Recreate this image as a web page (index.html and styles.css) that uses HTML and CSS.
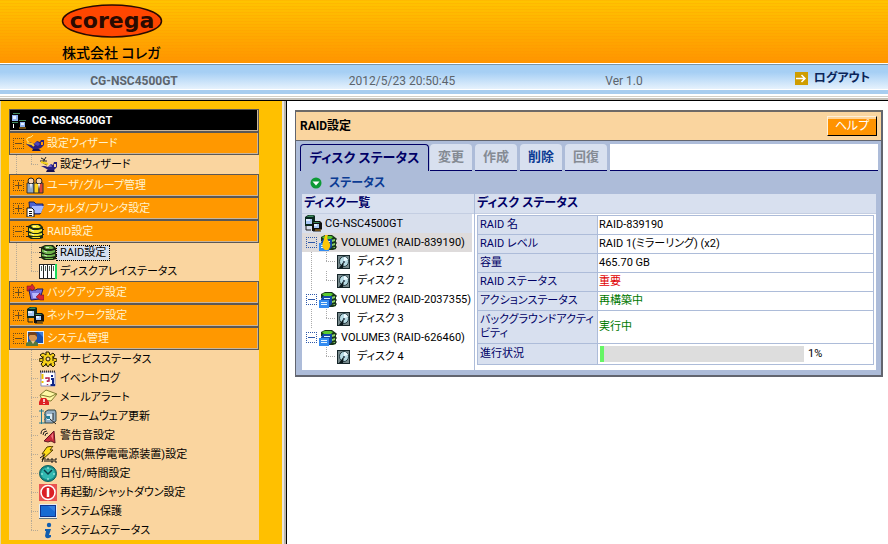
FILE: index.html
```html
<!DOCTYPE html>
<html lang="ja">
<head>
<meta charset="utf-8">
<title>RAID設定</title>
<link rel="stylesheet" href="styles.css">
</head>
<body>
<svg class="defs" aria-hidden="true">
  <symbol id="i-pc" viewBox="0 0 18 17">
    <path d="M1 2L4 0H10L11 1V9L9 11H1Z" fill="#0b2a20"/><path d="M3 1.500L5 .5H10L9 2H3Z" fill="#3f8b5c"/>
    <path d="M2 4H8V9H2Z" fill="#a9c8f5"/><path d="M2 4H6V6H2Z" fill="#e2eeff"/>
    <path d="M8 8L10 6H16L18 8V14L16 16H8Z" fill="#111"/><path d="M10 7H16L15 8H9Z" fill="#3f8b5c"/>
    <path d="M10 9H15V13H10Z" fill="#a9c8f5"/><path d="M10 9H13V11H10Z" fill="#e2eeff"/>
    <path d="M2 11V15H7M9 16H17" stroke="#222" fill="none"/><path d="M11 15H17" stroke="#c98a20"/>
  </symbol>
  <symbol id="i-pcw" viewBox="0 0 18 17">
    <path d="M2 1.500H9M1 10.500H7M8 8.500H15" stroke="#3f8b5c"/><path d="M1 3H7V9H1Z" fill="#8eb2ee"/><path d="M2 4H5V7H2Z" fill="#e2eeff"/>
    <path d="M9 10H14V15H9Z" fill="#8eb2ee"/><path d="M10 11H13V13H10Z" fill="#e2eeff"/><path d="M2.500 12V16" stroke="#fff"/><path d="M8 16H15" stroke="#c98a20"/>
  </symbol>
  <symbol id="i-lamp" viewBox="0 0 18 17">
    <path d="M4 8C0 6 0 3 3 2.500S6 1 7 0" fill="none" stroke="#fff2a0"/>
    <path d="M0 9L4 7L8 9L11 6L14 7L15 5H18V10L15 13L12 14H7L4 12Z" fill="#2a2180"/><path d="M8 9Q11 5 14 9L12 11Z" fill="#5147b8"/>
    <path d="M7 14H13L15 16H6Z" fill="#171150"/><path d="M1 8L6 9L8 11" fill="none" stroke="#ffca28" stroke-width="2"/><path d="M15 7H17V10H15Z" fill="#ff9800"/>
  </symbol>
  <symbol id="i-wiz" viewBox="0 0 18 17">
    <path d="M2 2L6 4M1 5H8M4 7L8 9M7 1L4 6" stroke="#222" fill="none"/><path d="M2 6L9 8" stroke="#f4d21c" stroke-width="2"/>
    <path d="M2 10H6L9 11L12 8L14 9L15 6H18V11L15 14H9L6 12Z" fill="#2a2180"/><path d="M9 11L12 8L13 11Z" fill="#6a60cc"/><path d="M8 14H15L16 16H7Z" fill="#171150"/><path d="M15 8H17V11H15Z" fill="#fad59f"/>
  </symbol>
  <symbol id="i-users" viewBox="0 0 18 17">
    <path d="M1 6H8V16H1Z" fill="#8ea8c8" stroke="#333"/><path d="M8 6H13V16H8Z" fill="#ffd21a" stroke="#333"/><path d="M13 6H17V16H13Z" fill="#d9453d" stroke="#333"/>
    <circle cx="5" cy="4" r="3" fill="#f7d3b0" stroke="#222"/><circle cx="13" cy="4" r="3" fill="#f7d3b0" stroke="#222"/><path d="M4 7L5 12L6 7M12 7L13 12L14 7" fill="#fff"/>
  </symbol>
  <symbol id="i-folder" viewBox="0 0 18 17">
    <path d="M3 2H8L10 4H17V7L14 14H4Z" fill="#4a62d0" stroke="#16205e"/><path d="M6 6H18L15 13H4Z" fill="#a5b9ff"/>
    <path d="M1 8H6L8 10V17H1Z" fill="#fff" stroke="#111"/><path d="M3 11.500H6M3 13.500H6M3 15.500H6" stroke="#111"/>
  </symbol>
  <symbol id="i-stack" viewBox="0 0 18 17">
    <path d="M2 3L6 1H14L17 4V15L14 16H5L2 14Z" fill="#1b2b12"/><path d="M0 3.500H3M0 8.500H3M0 13.500H3M16 6.500H18M16 11.500H18" stroke="#222"/>
    <path d="M5 3L7 2H12L15 4L13 5H7ZM3 5L7 7H12L16 6V8L12 10H7L3 8ZM3 10L7 11H12L16 10V12L12 13H7L3 12ZM5 14H14V15H7Z" fill="var(--disk)"/><path d="M7 3.500H10M5 7L8 8M5 11L8 12" stroke="#fff" opacity=".7"/>
  </symbol>
  <symbol id="i-bays" viewBox="0 0 18 17">
    <path d="M0 1H17V16H0Z" fill="#222"/><path d="M17 1V16" stroke="#19d85b" stroke-width="2"/><path d="M1 2H4V15H1ZM5 2H8V15H5ZM9 2H12V15H9ZM13 2H16V15H13Z" fill="#fff"/><path d="M2.500 3V8M6.500 3V8M10.500 3V8M14.500 3V8" stroke="#4f625a"/>
  </symbol>
  <symbol id="i-backup" viewBox="0 0 18 17">
    <path d="M3 6H10L11 5H17L14 15L5 16Z" fill="#7773dd" stroke="#1c1766"/><path d="M6 9H13L12 14H7Z" fill="#b9b8ff"/>
    <path d="M1 7V2H5L6 0L9 4L6 7L5 5H3V7Z" fill="#d82435" stroke="#5b1020" stroke-width=".5"/><path d="M10 13L14 9V11H18V16H14Z" fill="#d82435" stroke="#5b1020" stroke-width=".5"/>
  </symbol>
  <symbol id="i-admin" viewBox="0 0 18 17">
    <path d="M1 1H18V14H1Z" fill="#e6eef6"/><path d="M2 2H17V13H2Z" fill="#174fae"/><path d="M12 2L17 7V2Z" fill="#3e7edb"/>
    <path d="M3 5L5 3H9L11 5V9L8 12H6L3 9Z" fill="#d69652"/><path d="M2 7V4L4 2H9L11 4V7L9 5H4Z" fill="#70401d"/><path d="M0 16V13L4 11H9L12 13V16Z" fill="#55783d"/><path d="M5 11H9L7 14Z" fill="#e7c496"/>
  </symbol>
  <symbol id="i-gear" viewBox="0 0 18 17">
    <path d="M7 1H10L11 4L14 2L16 4L14 7L18 8V10L15 11L16 14L14 16L11 13L9 16L7 13L4 16L2 13L4 11L0 10V8L4 7L1 4L4 2L7 4Z" fill="#f6d21b" stroke="#251d05"/>
    <circle cx="9" cy="8" r="2" fill="#fad59f" stroke="#251d05"/><path d="M4 5V10M14 5V10M7 12V15M12 12V15" stroke="#251d05"/>
  </symbol>
  <symbol id="i-log" viewBox="0 0 18 17">
    <path d="M2 2H16V16H2Z" fill="#fff" stroke="#8989b8"/><path d="M1 1.500H17" stroke="#333" stroke-dasharray="1 1" stroke-width="2"/><path d="M3.500 4V9M3.500 11V13" stroke="#efc300" stroke-width="2"/>
    <path d="M7 9V8H10V11H8.500V12M8.500 14V15" fill="none" stroke="#b5234b" stroke-width="1.500"/><path d="M12 9H14V15M11.500 15H16M13 5V7" fill="none" stroke="#112888" stroke-width="2"/>
  </symbol>
  <symbol id="i-mail" viewBox="0 0 18 17">
    <path d="M1 6L7 1L18 5L12 12L3 11Z" fill="#fff8a5" stroke="#807a2f"/><path d="M2 6L11 8L17 5" fill="none" stroke="#807a2f"/>
    <path d="M0 16V13L2 9H7L10 13V16Z" fill="#dd2222"/><path d="M5 10V13M5 14V15" stroke="#fff" stroke-width="1.500"/>
  </symbol>
  <symbol id="i-fw" viewBox="0 0 18 17">
    <path d="M0 3H5M2.500 1V16M0 15H6" stroke="#237c95"/><path d="M6 4L9 2H16L17 4V13L14 15H6Z" fill="#93aec3" stroke="#344"/>
    <path d="M8 6H14V12H8Z" fill="#dcecf5"/><path d="M8 8H11V11H8Z" fill="#247f9b"/><path d="M11 11L17 16M14 5V12" stroke="#222"/><path d="M5 6L8 9L5 12" fill="none" stroke="#237c95"/>
  </symbol>
  <symbol id="i-horn" viewBox="0 0 18 17">
    <path d="M2 7Q2 2 7 2M4 8Q4 4 8 4M6 9Q6 6 9 6" fill="none" stroke="#222"/><path d="M5 14L15 4L16 16L12 14L9 15Z" fill="#c92d3c" stroke="#611924"/><path d="M12 9L14 6V13Z" fill="#ee7780"/>
  </symbol>
  <symbol id="i-ups" viewBox="0 0 18 17">
    <path d="M8 1L14 0L11 4H14L3 14L6 8H3Z" fill="#ffdf18" stroke="#4f3b00"/><path d="M1 12L5 9M3 16L5 11" stroke="#111"/><path d="M6 12V16M8 16V13H10V16M12 13V16H14V13H12M18 13H16V16H18" fill="none" stroke="#111"/>
  </symbol>
  <symbol id="i-clock" viewBox="0 0 18 17">
    <ellipse cx="9" cy="8.500" rx="8.500" ry="8" fill="#168b87" stroke="#10605e"/><ellipse cx="9" cy="8.500" rx="7" ry="6" fill="#31b8b0"/><path d="M5 5L9 9L13 5" fill="none" stroke="#073d46" stroke-width="1.500"/><path d="M9 2V4M9 13V15M2 9H4M14 9H16" stroke="#bbf2eb"/>
  </symbol>
  <symbol id="i-power" viewBox="0 0 18 17">
    <path d="M0 0H18V17H0Z" fill="#e95350"/><circle cx="9" cy="8.500" r="7" fill="#db1f25" stroke="#fff" stroke-width="1.500"/><path d="M9 4V13" stroke="#fff" stroke-width="2.500"/>
  </symbol>
  <symbol id="i-screen" viewBox="0 0 18 17">
    <path d="M0 1H18V15H0Z" fill="#e5edf2"/><path d="M1 2H17V14H1Z" fill="#12348c"/><path d="M2 3H16V13H2Z" fill="#176bd3"/><path d="M0 15.500H18" stroke="#60747d"/><path d="M9 3H16V9Z" fill="#327fe0"/>
  </symbol>
  <symbol id="i-info" viewBox="0 0 18 17">
    <circle cx="10" cy="3" r="2.200" fill="#135eae"/><path d="M6 7H12L10 13L12 13V15Q7 18 6 14L7 9H6Z" fill="#135eae"/>
  </symbol>
  <symbol id="i-vol" viewBox="0 0 18 17">
    <path d="M2 3L6 1H13L17 4V15L14 16H10V7H2Z" fill="#17371a"/><path d="M3 3L6 2H12L14 3L12 5H5Z" fill="#59c92f"/><path d="M12 6L16 5V7L13 8ZM13 10L16 9V11L13 12ZM13 14L16 13V14Z" fill="#8bd466"/><path d="M17 5H18M17 9H18M17 13H18" stroke="#111"/>
    <path d="M2 8L4 5H13V13L10 16H2Z" fill="#1149a8"/><path d="M0 9H10V17H0Z" fill="#358cf0"/><path d="M2 11.500H8M2 13.500H8M5 7.500H11" stroke="#e4f4ff"/>
  </symbol>
  <symbol id="i-disk" viewBox="0 0 13 14">
    <path d="M0 0H13V14H0Z" fill="#152529"/><path d="M1 1H12V13H1Z" fill="#77898c"/><ellipse cx="7" cy="6.500" rx="4.500" ry="5" fill="#b9dce5" stroke="#263e45"/><path d="M7 2V6L11 5Q10 2 7 2Z" fill="#edfaff"/><path d="M2 13L7 6L6 13Z" fill="#0b171b"/><circle cx="7" cy="7" r="1" fill="#345"/>
  </symbol>
</svg>

<header class="masthead">
  <div class="brand">
    <svg class="logo" viewBox="0 0 102 36" role="img" aria-label="corega">
      <ellipse cx="51" cy="18" rx="49.500" ry="16" fill="#ff4600" stroke="#2a0a00" stroke-width="1.500"/>
      <text class="logo-text" x="51" y="25" text-anchor="middle">corega</text>
    </svg>
    <div class="company">株式会社 コレガ</div>
  </div>
  <div class="infobar">
    <strong>CG-NSC4500GT</strong>
    <span>2012/5/23 20:50:45</span>
    <span>Ver 1.0</span>
    <a class="logout" href="#">
      <svg width="13" height="13" viewBox="0 0 13 13" aria-hidden="true"><path d="M0 0H13V13H0Z" fill="#cf9d00"/><path d="M1 6.500H10M6.500 3L10 6.500L6.500 10" fill="none" stroke="#fff" stroke-width="1.500"/></svg>
      ログアウト
    </a>
  </div>
  <div class="infobar-edge"></div>
</header>

<div class="frame">
  <nav class="sidebar">
    <div class="menu">
      <div class="host"><svg class="ico"><use href="#i-pcw"/></svg>CG-NSC4500GT</div>
      <div class="bar"><button class="toggle" aria-label="閉じる"></button><svg class="ico"><use href="#i-lamp"/></svg><a href="#">設定ウィザード</a></div>
      <ul class="items through">
        <li><svg class="ico"><use href="#i-wiz"/></svg><a href="#">設定ウィザード</a></li>
      </ul>
      <div class="bar"><button class="toggle plus" aria-label="開く"></button><svg class="ico"><use href="#i-users"/></svg><a href="#">ユーザ/グループ管理</a></div>
      <div class="bar"><button class="toggle plus" aria-label="開く"></button><svg class="ico"><use href="#i-folder"/></svg><a href="#">フォルダ/プリンタ設定</a></div>
      <div class="bar"><button class="toggle" aria-label="閉じる"></button><svg class="ico gold"><use href="#i-stack"/></svg><a href="#">RAID設定</a></div>
      <ul class="items through">
        <li><svg class="ico green"><use href="#i-stack"/></svg><a class="current" href="#">RAID設定</a></li>
        <li><svg class="ico"><use href="#i-bays"/></svg><a href="#">ディスクアレイステータス</a></li>
      </ul>
      <div class="bar"><button class="toggle plus" aria-label="開く"></button><svg class="ico"><use href="#i-backup"/></svg><a href="#">バックアップ設定</a></div>
      <div class="bar"><button class="toggle plus" aria-label="開く"></button><svg class="ico"><use href="#i-pc"/></svg><a href="#">ネットワーク設定</a></div>
      <div class="bar"><button class="toggle" aria-label="閉じる"></button><svg class="ico"><use href="#i-admin"/></svg><a href="#">システム管理</a></div>
      <ul class="items">
        <li><svg class="ico"><use href="#i-gear"/></svg><a href="#">サービスステータス</a></li>
        <li><svg class="ico"><use href="#i-log"/></svg><a href="#">イベントログ</a></li>
        <li><svg class="ico"><use href="#i-mail"/></svg><a href="#">メールアラート</a></li>
        <li><svg class="ico"><use href="#i-fw"/></svg><a href="#">ファームウェア更新</a></li>
        <li><svg class="ico"><use href="#i-horn"/></svg><a href="#">警告音設定</a></li>
        <li><svg class="ico"><use href="#i-ups"/></svg><a href="#">UPS(無停電電源装置)設定</a></li>
        <li><svg class="ico"><use href="#i-clock"/></svg><a href="#">日付/時間設定</a></li>
        <li><svg class="ico"><use href="#i-power"/></svg><a href="#">再起動/シャットダウン設定</a></li>
        <li><svg class="ico"><use href="#i-screen"/></svg><a href="#">システム保護</a></li>
        <li><svg class="ico"><use href="#i-info"/></svg><a href="#">システムステータス</a></li>
      </ul>
    </div>
  </nav>

  <main class="content">
    <section class="panel">
      <div class="panel-title"><h1>RAID設定</h1><button class="help">ヘルプ</button></div>
      <div class="panel-body">
        <div class="tabs">
          <button class="tab active">ディスク ステータス</button>
          <button class="tab" disabled>変更</button>
          <button class="tab" disabled>作成</button>
          <button class="tab">削除</button>
          <button class="tab" disabled>回復</button>
          <div class="tab-fill"></div>
        </div>
        <h2 class="status"><svg width="12" height="12" viewBox="0 0 12 12" aria-hidden="true"><circle cx="6" cy="6" r="5.500" fill="#0d9a35"/><path d="M2.500 4.500H9.500L6 8.500Z" fill="#fff"/></svg>ステータス</h2>
        <div class="columns">
          <div class="col">
            <h3>ディスク一覧</h3>
            <ul class="tree">
              <li class="root"><svg class="ico"><use href="#i-pc"/></svg>CG-NSC4500GT</li>
              <li class="vol selected"><button class="toggle" aria-label="閉じる"></button><svg class="ico"><use href="#i-vol"/><path d="M6 1H9Q7 4 10 8T9 16H6Q2 13 4 8T6 1Z" fill="#ffc60a"/></svg>VOLUME1 (RAID-839190)</li>
              <li class="disk more"><svg class="ico"><use href="#i-disk"/></svg>ディスク 1</li>
              <li class="disk more"><svg class="ico"><use href="#i-disk"/></svg>ディスク 2</li>
              <li class="vol"><button class="toggle" aria-label="閉じる"></button><svg class="ico"><use href="#i-vol"/></svg>VOLUME2 (RAID-2037355)</li>
              <li class="disk more"><svg class="ico"><use href="#i-disk"/></svg>ディスク 3</li>
              <li class="vol"><button class="toggle" aria-label="閉じる"></button><svg class="ico"><use href="#i-vol"/></svg>VOLUME3 (RAID-626460)</li>
              <li class="disk"><svg class="ico"><use href="#i-disk"/></svg>ディスク 4</li>
            </ul>
          </div>
          <div class="col detail">
            <h3>ディスク ステータス</h3>
            <table>
              <tr><th scope="row">RAID 名</th><td>RAID-839190</td></tr>
              <tr><th scope="row">RAID レベル</th><td>RAID 1(ミラーリング) (x2)</td></tr>
              <tr><th scope="row">容量</th><td>465.70 GB</td></tr>
              <tr><th scope="row">RAID ステータス</th><td class="bad">重要</td></tr>
              <tr><th scope="row">アクションステータス</th><td class="good">再構築中</td></tr>
              <tr><th scope="row">バックグラウンドアクティビティ</th><td class="good">実行中</td></tr>
              <tr><th scope="row">進行状況</th><td><div class="progress"><div class="track"><div class="done" style="width:2%"></div></div>1%</div></td></tr>
            </table>
          </div>
        </div>
      </div>
    </section>
  </main>
</div>
</body>
</html>
```

FILE: styles.css
```css
* { box-sizing: border-box; }
html, body { height: 100%; }
body {
  margin: 0;
  display: flex;
  flex-direction: column;
  overflow: hidden;
  background: #fff;
  color: #000;
  font-family: Roboto, "Noto Sans CJK JP", sans-serif;
  font-size: 11px;
  line-height: 14px;
  font-feature-settings: "palt";
}
ul { list-style: none; margin: 0; padding: 0; }
h1, h2, h3 { margin: 0; font-size: 12px; }
a { color: inherit; text-decoration: none; }
button { font: inherit; font-feature-settings: inherit; padding: 0; }
.defs { display: none; }
.ico { flex: none; width: 18px; height: 17px; }
.gold { --disk: #f3e52b; }
.green { --disk: #6fb54c; }

/* Masthead */
.masthead { flex: none; border-bottom: 1px solid #000; }
.brand {
  height: 63px;
  padding: 3px 0 0 61px;
  background:
    repeating-linear-gradient(rgba(255, 140, 0, .16) 0 1px, transparent 1px 3px),
    linear-gradient(#ffc400, #ff9500);
}
.logo { display: block; width: 102px; height: 36px; }
.logo-text { font: bold 22px "DejaVu Sans", sans-serif; fill: #2a0a00; }
.company { font-size: 14px; font-weight: 500; line-height: 20px; margin-top: 4px; padding-left: 1px; }
.infobar {
  height: 26px;
  display: grid;
  grid-template-columns: 268fr 268fr 176fr 176fr;
  align-items: center;
  justify-items: center;
  padding-top: 6px;
  border-top: 1px solid #7b95a8;
  border-bottom: 1px solid #fff;
  margin-top: 1px;
  background: linear-gradient(#a6cff4 30%, #e6f2fd);
  font-size: 12px;
  color: #5c646c;
}
.logout {
  justify-self: end;
  display: flex;
  align-items: center;
  gap: 6px;
  margin: 0 18px 6px 0;
  font-weight: bold;
  color: #0a2458;
}
.infobar-edge {
  height: 10px;
  background: linear-gradient(#a8cdf0 0 4px, #fff 4px 6px, #d4d0c8 6px 7px, #fff 7px 8px, #c4c0b8 8px 10px);
}

.frame { flex: 1; min-height: 0; display: flex; }

/* Sidebar */
.sidebar {
  flex: none;
  padding: 8px 27px 4px 8px;
  border-left: 1px solid #e8d8a8;
  border-right: 1px solid #000;
  background: #ffc000;
  box-shadow: inset -2px 0 #b8b4ac, inset -4px 0 #e8e4dc;
}
.menu { width: 250px; background: #fad59f; }
.host, .bar {
  height: 23px;
  display: flex;
  align-items: center;
  border: 1px solid #5b5856;
  box-shadow: inset -1px -1px #c9b59b;
}
.host { padding-left: 1px; gap: 3px; background: #000; color: #fff; font-weight: bold; }
.bar { padding-left: 3px; background: #ff9800; color: #fff3cf; }
.bar a { padding-left: 3px; }
.toggle {
  flex: none;
  width: 11px;
  height: 11px;
  margin-right: 2px;
  border: 1px dotted #684a20;
  background: linear-gradient(#684a20, #684a20) center / 7px 1px no-repeat;
}
.toggle.plus {
  background:
    linear-gradient(#684a20, #684a20) center / 7px 1px no-repeat,
    linear-gradient(#684a20, #684a20) center / 1px 7px no-repeat;
}
.items li {
  height: 19px;
  display: flex;
  align-items: center;
  padding-left: 30px;
  background:
    repeating-linear-gradient(#b5a995 0 1px, transparent 1px 2px) 22px 0 / 1px 100% no-repeat,
    repeating-linear-gradient(90deg, #b5a995 0 1px, transparent 1px 2px) 22px 9px / 8px 1px no-repeat;
}
.items li:last-child { background-size: 1px 10px, 8px 1px; }
.items.through {
  background: repeating-linear-gradient(#b5a995 0 1px, transparent 1px 2px) 7px 0 / 1px 100% no-repeat;
}
.items a { padding: 0 3px; }
.items .current { background: #d6e0f0; outline: 1px dotted #000; }

/* Panel */
.content { flex: 1; min-width: 0; padding: 9px 5px 0 8px; }
.panel { border: 2px solid #62656f; border-top-color: #6d6a68; border-left-width: 1px; background: #adbcd9; }
.panel-title {
  height: 29px;
  display: flex;
  align-items: center;
  justify-content: space-between;
  padding: 0 4px;
  border-bottom: 1px solid #62656f;
  background: #fad59f;
}
.help {
  width: 50px;
  height: 20px;
  border: 1px solid #000;
  border-top-color: #fff0d8;
  border-left-color: #fff0d8;
  box-shadow: inset 0 2px #ffd49a;
  background: #ff9300;
  color: #fff;
  font-size: 12px;
}
.panel-body { padding: 3px 3px 5px 4px; }
.tabs { height: 27px; display: flex; gap: 3px; }
.tab {
  width: 42px;
  border: 0;
  border-bottom: 1px solid #000066;
  border-radius: 4px 4px 0 0;
  background: #d8e0ef;
  color: #0b3b93;
  font-size: 13px;
  font-weight: bold;
}
.tab:disabled { color: #858b94; }
.tab.active {
  width: 129px;
  margin-right: -2px;
  border: 1px solid #000066;
  border-bottom: 0;
  background: #adbcd9;
  color: #000066;
}
.tab-fill { flex: 1; border-bottom: 1px solid #000066; background: #fff; }
.status { height: 23px; display: flex; align-items: center; gap: 7px; padding-left: 10px; color: #0b3b93; }
.columns { display: flex; margin: 0 2px; background: #fff; }
.col { flex: none; width: 172px; }
.col.detail { flex: 1; border-left: 1px solid #adbcd9; }
.col h3 {
  height: 20px;
  padding: 0 2px;
  border-bottom: 1px solid #c4cee2;
  background: #d8e0ef;
  color: #000066;
  line-height: 18px;
}

/* Disk tree */
.tree { padding-bottom: 4px; white-space: nowrap; }
.tree li { height: 19px; display: flex; align-items: center; margin-right: 2px; }
.tree .root { padding-left: 2px; gap: 3px; background: #d8dfed; }
.tree .vol { padding-left: 4px; }
.tree .vol .ico { margin-right: 4px; }
.tree .selected { background: #dedbdb; }
.tree .toggle {
  border-color: #2d58aa;
  background: linear-gradient(#2d58aa, #2d58aa) center / 7px 1px no-repeat;
}
.tree .disk {
  padding-left: 35px;
  gap: 7px;
  background:
    repeating-linear-gradient(#aaa 0 1px, transparent 1px 2px) 24px 0 / 1px 10px no-repeat,
    repeating-linear-gradient(90deg, #aaa 0 1px, transparent 1px 2px) 24px 9px / 9px 1px no-repeat;
}
.tree .disk.more {
  background:
    repeating-linear-gradient(#aaa 0 1px, transparent 1px 2px) 24px 0 / 1px 10px no-repeat,
    repeating-linear-gradient(90deg, #aaa 0 1px, transparent 1px 2px) 24px 9px / 9px 1px no-repeat,
    repeating-linear-gradient(#aaa 0 1px, transparent 1px 2px) 9px 0 / 1px 100% no-repeat;
}
.tree .disk .ico { width: 13px; height: 14px; }

/* Detail table */
table { width: calc(100% - 4px); margin: 1px 2px 0; border-collapse: collapse; }
th, td {
  height: 19px;
  padding: 2px 1px;
  border: 1px solid #adbcd9;
  text-align: left;
  font-weight: normal;
}
th { width: 120px; padding-left: 2px; background: #d8e0ef; color: #000066; }
.bad { color: #e00000; }
.good { color: #007800; }
.progress { display: flex; align-items: center; gap: 4px; padding-left: 1px; }
.track { width: 75%; height: 16px; background: #ddd; }
.done { height: 100%; background: #66f566; }
```
